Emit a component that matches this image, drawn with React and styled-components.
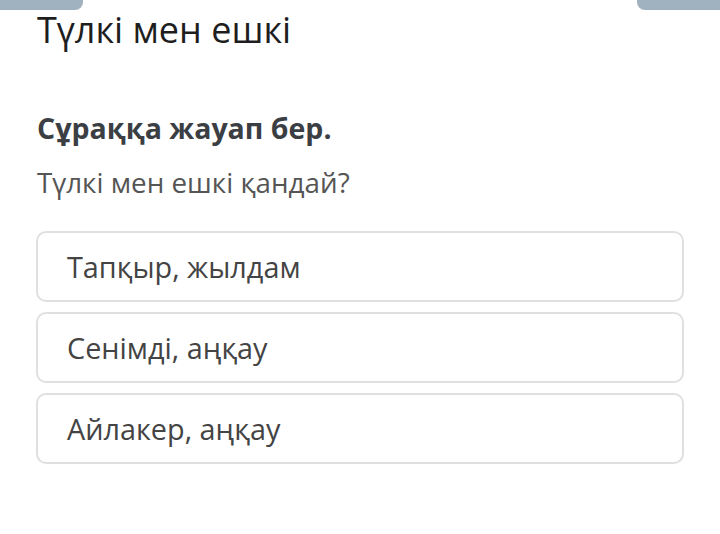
import styled, { createGlobalStyle } from 'styled-components';

const options = ['Тапқыр, жылдам', 'Сенімді, аңқау', 'Айлакер, аңқау'];

const GlobalStyle = createGlobalStyle`
  html, body {
    margin: 0;
    padding: 0;
    background: #ffffff;
    font-family: 'Open Sans', 'Noto Sans', sans-serif;
  }
`;

export default function App() {
  return (
    <Page>
      <GlobalStyle />
      <TabRow>
        <Tab $side="left" />
        <Tab $side="right" />
      </TabRow>
      <Content>
        <Title>Түлкі мен ешкі</Title>
        <Instruction>Сұраққа жауап бер.</Instruction>
        <Question>Түлкі мен ешкі қандай?</Question>
        <OptionList>
          {options.map((opt) => (
            <Option key={opt}>{opt}</Option>
          ))}
        </OptionList>
      </Content>
    </Page>
  );
}

const Page = styled.div`
  width: 720px;
  height: 534px;
  overflow: hidden;
  background: #ffffff;
`;

const TabRow = styled.div`
  display: flex;
  justify-content: space-between;
  height: 10px;
`;

const Tab = styled.div`
  width: 83px;
  height: 10px;
  background: #a0b1bf;
  border-radius: ${(p) => (p.$side === 'left' ? '0 0 8px 0' : '0 0 0 8px')};
`;

const Content = styled.div`
  padding: 0 36px;
`;

const Title = styled.div`
  font-size: 36px;
  line-height: 40px;
  color: #1e1e1e;
  padding-left: 1px;
`;

const Instruction = styled.div`
  margin-top: 62px;
  font-size: 28.5px;
  line-height: 32px;
  font-weight: 700;
  color: #3b3f44;
  padding-left: 1px;
`;

const Question = styled.div`
  margin-top: 22px;
  font-size: 27.8px;
  line-height: 32px;
  color: #555555;
  padding-left: 1px;
`;

const OptionList = styled.div`
  display: flex;
  flex-direction: column;
  gap: 10px;
  margin-top: 33px;
`;

const Option = styled.div`
  box-sizing: border-box;
  height: 71px;
  display: flex;
  align-items: center;
  padding-left: 29px;
  border: 2px solid #e0e0e0;
  border-radius: 10px;
  font-size: 28.8px;
  color: #444444;
`;
